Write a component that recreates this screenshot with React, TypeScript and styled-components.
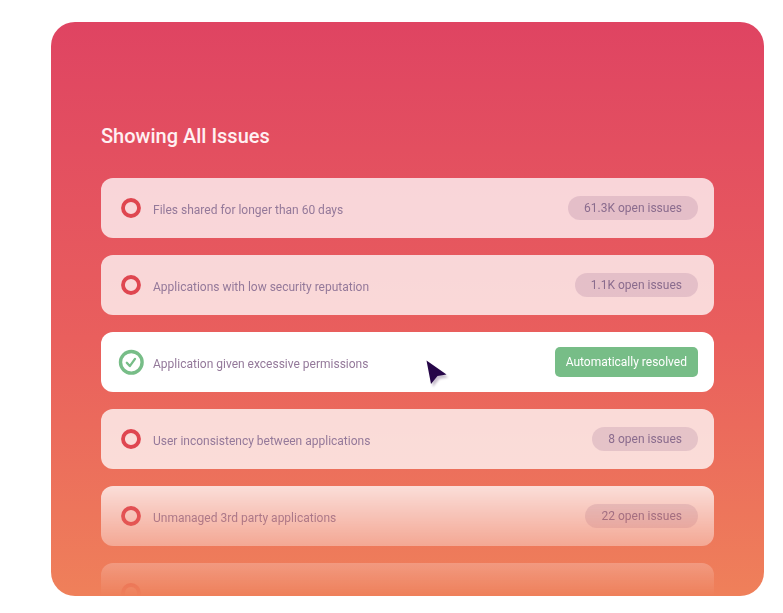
import React from "react";
import styled, { createGlobalStyle } from "styled-components";

const GlobalStyle = createGlobalStyle`
  *, *::before, *::after { box-sizing: border-box; }
  body {
    margin: 0;
    background: #ffffff;
    font-family: Roboto, "Liberation Sans", sans-serif;
  }
`;

const Page = styled.main`
  display: flex;
  height: 100vh;
  padding: 22px 19px 17px 51px;
`;

const Panel = styled.section`
  display: flex;
  flex: 1;
  flex-direction: column;
  min-width: 0;
  padding: 102px 50px 0;
  overflow: hidden;
  border-radius: 24px;
  background: linear-gradient(#df4462, #e95f5d 55%, #ef805a);
`;

const Title = styled.h1`
  margin: 0 0 30px;
  color: #fff0f2;
  font-size: 20px;
  font-weight: 500;
  line-height: 24px;
`;

const IssueList = styled.ul`
  display: flex;
  flex: 1;
  flex-direction: column;
  gap: 17px;
  min-height: 0;
  margin: 0;
  padding: 0;
  overflow: hidden;
  list-style: none;
  mask-image: linear-gradient(#000 calc(100% - 109px), transparent);
`;

const IssueRow = styled.li<{ $resolved?: boolean }>`
  position: relative;
  display: flex;
  flex: none;
  align-items: center;
  gap: 10px;
  height: 60px;
  padding: 0 16px 0 18px;
  border-radius: 12px;
  background: ${(p) => (p.$resolved ? "#ffffff" : "rgba(255, 255, 255, 0.76)")};
`;

const StatusIcon = styled.svg`
  flex: none;
  width: 24px;
  height: 24px;
  overflow: visible;
`;

const Label = styled.span`
  flex: 1;
  padding-top: 4px;
  color: #94799a;
  font-size: 12px;
  line-height: 16px;
`;

const CountPill = styled.span`
  padding: 4px 16px;
  border-radius: 12px;
  background: rgba(120, 70, 120, 0.16);
  color: #8a6c8e;
  font-size: 12px;
  line-height: 16px;
`;

const ResolvedBadge = styled.span`
  padding: 7px 11px;
  border-radius: 5px;
  background: #77bd87;
  color: #ffffff;
  font-size: 12px;
  line-height: 16px;
`;

const Pointer = styled.svg`
  position: absolute;
  top: 27px;
  left: 53%;
  width: 28px;
  height: 32px;
  filter: drop-shadow(2px 3px 1px rgba(60, 30, 80, 0.28));
`;

type Issue = { label: string; open?: string; resolved?: boolean };

const issues: Issue[] = [
  { label: "Files shared for longer than 60 days", open: "61.3K" },
  { label: "Applications with low security reputation", open: "1.1K" },
  { label: "Application given excessive permissions", resolved: true },
  { label: "User inconsistency between applications", open: "8" },
  { label: "Unmanaged 3rd party applications", open: "22" },
];

const OpenIcon = () => (
  <StatusIcon viewBox="0 0 24 24" aria-hidden="true">
    <circle cx="12" cy="12" r="8" fill="none" stroke="#df4650" strokeWidth="3.8" />
  </StatusIcon>
);

const CheckIcon = () => (
  <StatusIcon viewBox="0 0 24 24" aria-hidden="true">
    <circle cx="12.3" cy="12.3" r="10.8" fill="none" stroke="#77bd87" strokeWidth="3.4" />
    <path
      d="M7.8 12.8l3 3.3 5.2-7.2"
      fill="none"
      stroke="#77bd87"
      strokeWidth="2.3"
      strokeLinecap="round"
      strokeLinejoin="round"
    />
  </StatusIcon>
);

export default function App() {
  return (
    <>
      <GlobalStyle />
      <Page>
        <Panel>
          <Title>Showing All Issues</Title>
          <IssueList>
            {issues.map(({ label, open, resolved }) => (
              <IssueRow key={label} $resolved={resolved}>
                {resolved ? <CheckIcon /> : <OpenIcon />}
                <Label>{label}</Label>
                {resolved ? (
                  <>
                    <ResolvedBadge>Automatically resolved</ResolvedBadge>
                    <Pointer viewBox="0 0 28 32" aria-hidden="true">
                      <path d="M0.5 1.5L20.5 15.5L11.5 17L5 25Z" fill="#260648" />
                    </Pointer>
                  </>
                ) : (
                  <CountPill>{open} open issues</CountPill>
                )}
              </IssueRow>
            ))}
            <IssueRow aria-hidden="true">
              <OpenIcon />
            </IssueRow>
          </IssueList>
        </Panel>
      </Page>
    </>
  );
}
